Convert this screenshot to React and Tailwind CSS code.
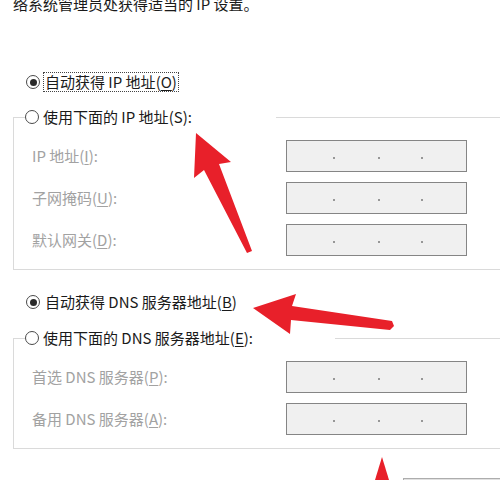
import React from 'react'

const FONT = { fontFamily: '"Microsoft YaHei UI", "Noto Sans CJK SC", "Noto Sans", sans-serif' }

function Radio({ checked }) {
  return (
    <span className="flex h-[14px] w-[14px] shrink-0 items-center justify-center rounded-full border border-[#4a4a4a] bg-white">
      {checked && <span className="h-[7px] w-[7px] rounded-full bg-[#2a2a2a]" />}
    </span>
  )
}

function Key({ k, plain }) {
  return (
    <>
      (<span className={plain ? '' : 'underline underline-offset-[2px] decoration-1'}>{k}</span>)
    </>
  )
}

function IpBox() {
  return (
    <div className="flex h-[32px] w-[181px] items-center border border-[#858585] bg-[#f0f0f0] pl-[46px] pt-[4px]">
      <span className="h-[2px] w-[2px] rounded-full bg-[#7a7a7a]" />
      <span className="ml-[43px] h-[2px] w-[2px] rounded-full bg-[#7a7a7a]" />
      <span className="ml-[41px] h-[2px] w-[2px] rounded-full bg-[#7a7a7a]" />
    </div>
  )
}

function FieldRow({ label }) {
  return (
    <div className="flex items-center">
      <div className="w-[254px] text-[15px] leading-[20px] text-[#a2a2a2]">{label}</div>
      <IpBox />
    </div>
  )
}

function Group({ header, gapEnd, rows }) {
  return (
    <div className="w-[520px] pl-[13px]">
      <div className="flex h-[20px] items-center">
        <div className="h-px w-[12px] bg-[#dadada]" />
        <div className="flex items-center gap-[4px]" style={{ width: gapEnd }}>
          <Radio />
          <span className="text-[15px] leading-[20px] text-[#1a1a1a]">{header}</span>
        </div>
        <div className="h-px flex-1 bg-[#dadada]" />
      </div>
      <div className="-mt-[10px] flex flex-col gap-[10px] border-b border-l border-r border-[#dadada] pb-[13px] pl-[18px] pt-[23px]">
        {rows.map((r, i) => (
          <FieldRow key={i} label={r} />
        ))}
      </div>
    </div>
  )
}

export default function App() {
  return (
    <div className="relative h-[480px] w-[500px] overflow-hidden bg-white" style={FONT}>
      <div className="-mt-[6px] h-[20px] pl-[13px] text-[15px] leading-[20px] text-[#1a1a1a]">
        络系统管理员处获得适当的 IP 设置。
      </div>

      <div className="mt-[58px] flex h-[20px] items-center pl-[26px] text-[15px] leading-[18px] text-[#1a1a1a]">
        <Radio checked />
        <span className="ml-[3px] border border-dotted border-[#444] px-px">
          自动获得 IP 地址<Key k="O" />
        </span>
      </div>

      <div className="mt-[15px]">
        <Group
          header={<>使用下面的 IP 地址<Key k="S" plain />:</>}
          gapEnd={251}
          rows={[
            <>IP 地址<Key k="I" />:</>,
            <>子网掩码<Key k="U" />:</>,
            <>默认网关<Key k="D" />:</>,
          ]}
        />
      </div>

      <div className="mt-[22px] flex h-[20px] items-center gap-[5px] pl-[26px] text-[15px] leading-[20px] text-[#1a1a1a]">
        <Radio checked />
        <span>自动获得 DNS 服务器地址<Key k="B" /></span>
      </div>

      <div className="mt-[16px]">
        <Group
          header={<>使用下面的 DNS 服务器地址<Key k="E" />:</>}
          gapEnd={310}
          rows={[
            <>首选 DNS 服务器<Key k="P" />:</>,
            <>备用 DNS 服务器<Key k="A" />:</>,
          ]}
        />
      </div>

      <div className="ml-[403px] mt-[29px] h-[30px] w-[110px] border border-[#adadad] bg-[#e1e1e1]" />

      <svg className="pointer-events-none absolute left-0 top-0" width="500" height="480" viewBox="0 0 500 480">
        <polygon
          fill="#e8202a"
          points="196,133 231,162 219,164 252,251 247,253 204,170 194,178"
        />
        <polygon
          fill="#e8202a"
          points="253,308 296,294 292,306 392,321 394,326 390,330 291,320 290,334"
        />
        <polygon fill="#e8202a" points="382,457 389,480 375,480" />
      </svg>
    </div>
  )
}
